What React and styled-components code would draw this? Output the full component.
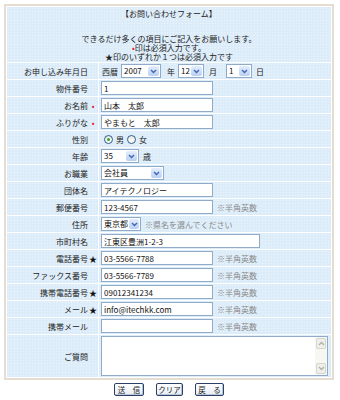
import React from 'react'
import styled, { createGlobalStyle } from 'styled-components'

const GlobalStyle = createGlobalStyle`
  body {
    margin: 0;
    background: #ffffff;
    font-family: "Noto Sans CJK JP", "DejaVu Sans", sans-serif;
    font-size: 8px;
    color: #222;
  }
`

const Frame = styled.div`
  margin: 4px 0 0 4px;
  width: 330px;
  box-sizing: border-box;
  border: 2px solid #e4ddd0;
  background: #ffffff;
`

const FormTable = styled.table`
  width: 100%;
  border-collapse: separate;
  border-spacing: 1px;
  background: #ffffff;
`

const Cell = styled.td`
  background-color: #dcecf9;
  background-image: radial-gradient(#ecf5fd 0.6px, transparent 0.8px);
  background-size: 3px 3px;
  padding: 0;
  height: ${p => p.$h || 16}px;
  line-height: 9px;
  vertical-align: middle;
`

const HeaderCell = styled(Cell)`
  text-align: center;
  vertical-align: top;
  padding-top: 2px;
`

const Title = styled.div`
  margin-bottom: 16px;
`

const LabelCell = styled(Cell)`
  width: 91px;
  text-align: right;
  white-space: nowrap;
`

const ValueCell = styled(Cell)`
  padding-left: 2px;
  white-space: nowrap;
`

const Mark = styled.span`
  display: inline-block;
  width: 10px;
  text-align: center;
  color: ${p => (p.$red ? '#e8202a' : '#111')};
`

const Red = styled.span`
  color: #e8202a;
`

const Inline = styled.div`
  display: flex;
  align-items: center;
  gap: ${p => p.$gap || 4}px;
`

const Unit = styled.span`
  margin: 0 ${p => p.$r || 0}px 0 ${p => p.$l || 0}px;
`

const TextInput = styled.input`
  box-sizing: border-box;
  width: ${p => p.$w || 112}px;
  height: 14px;
  border: 1px solid #8fabc9;
  background: #fff;
  padding: 0 2px;
  margin: 0;
  font-family: "Noto Sans CJK JP", "DejaVu Sans", sans-serif;
  font-size: 8px;
  color: #111;
  outline: none;
`

const Hint = styled.span`
  color: #8a8a8a;
`

const SelectBox = styled.span`
  display: inline-flex;
  box-sizing: border-box;
  width: ${p => p.$w}px;
  height: 14px;
  border: 1px solid #8fabc9;
  background: #fff;
`

const SelectValue = styled.span`
  flex: 1;
  padding-left: 2px;
  line-height: 12px;
  color: #111;
`

const SelectArrow = styled.span`
  width: 11px;
  margin: 1px;
  border-radius: 2px;
  background: linear-gradient(#e4eefd, #b9d0f4);
  display: flex;
  align-items: center;
  justify-content: center;
`

const Radio = styled.span`
  display: inline-flex;
  align-items: center;
  justify-content: center;
  box-sizing: border-box;
  width: 9px;
  height: 9px;
  border-radius: 50%;
  border: 1px solid #2c5d8c;
  background: linear-gradient(#e8e8e0, #ffffff);
  &::after {
    content: '';
    width: 3px;
    height: 3px;
    border-radius: 50%;
    background: ${p => (p.$checked ? '#2fa52f' : 'transparent')};
  }
`

const AreaBox = styled.div`
  display: flex;
  box-sizing: border-box;
  width: 227px;
  height: 40px;
  border: 1px solid #8fabc9;
  background: #fff;
`

const Area = styled.textarea`
  flex: 1;
  border: none;
  resize: none;
  outline: none;
  background: transparent;
  margin: 0;
  padding: 0;
`

const ScrollTrack = styled.div`
  width: 10px;
  display: flex;
  flex-direction: column;
  justify-content: space-between;
  padding: 1px;
  background: #f6f6f2;
`

const ScrollButton = styled.span`
  height: 9px;
  border: 1px solid #d6d6cc;
  border-radius: 2px;
  background: #f0f0ea;
  display: flex;
  align-items: center;
  justify-content: center;
`

const Buttons = styled.div`
  width: 330px;
  margin-left: 4px;
  margin-top: 3px;
  display: flex;
  justify-content: center;
  gap: 12px;
`

const Button = styled.button`
  box-sizing: border-box;
  width: ${p => p.$w}px;
  height: 13px;
  padding: 0;
  border: 1px solid #2c3f66;
  border-radius: 2px;
  background: linear-gradient(#ffffff, #e6ecf5);
  box-shadow: inset -1px -1px 0 #b8c4d8;
  font-family: "Noto Sans CJK JP", "DejaVu Sans", sans-serif;
  font-size: 7.5px;
  line-height: 11px;
  color: #222;
  white-space: nowrap;
`

const Chevron = ({ up, color = '#3f66b0' }) => (
  <svg width="7" height="5" viewBox="0 0 7 5">
    <path d={up ? 'M1 4 L3.5 1.5 L6 4' : 'M1 1 L3.5 3.5 L6 1'} fill="none" stroke={color} strokeWidth="1.4" />
  </svg>
)

const Select = ({ w, value }) => (
  <SelectBox $w={w}>
    <SelectValue>{value}</SelectValue>
    <SelectArrow><Chevron /></SelectArrow>
  </SelectBox>
)

const Row = ({ label, mark, children }) => (
  <tr>
    <LabelCell>
      {label}
      <Mark $red={mark === '*'}>{mark === '*' ? '•' : mark}</Mark>
    </LabelCell>
    <ValueCell>{children}</ValueCell>
  </tr>
)

const phoneRows = [
  { label: '電話番号', mark: '★', value: '03-5566-7788' },
  { label: 'ファックス番号', value: '03-5566-7789' },
  { label: '携帯電話番号', mark: '★', value: '09012341234' },
  { label: 'メール', mark: '★', value: 'info@itechkk.com' },
  { label: '携帯メール', value: '' },
]

export default function App() {
  return (
    <>
      <GlobalStyle />
      <Frame>
        <FormTable>
          <tbody>
            <tr>
              <HeaderCell colSpan={2} $h={53}>
                <Title>【お問い合わせフォーム】</Title>
                <div>できるだけ多くの項目にご記入をお願いします。</div>
                <div><Red>•</Red>印は必須入力です。</div>
                <div>★印のいずれか１つは必須入力です</div>
              </HeaderCell>
            </tr>
            <Row label="お申し込み年月日">
              <Inline $gap={3}>
                <Unit $l={1}>西暦</Unit>
                <Select w={40} value="2007" />
                <Unit $l={3}>年</Unit>
                <Select w={26} value="12" />
                <Unit $l={2} $r={6}>月</Unit>
                <Select w={26} value="1" />
                <Unit $l={1}>日</Unit>
              </Inline>
            </Row>
            <Row label="物件番号"><TextInput defaultValue="1" /></Row>
            <Row label="お名前" mark="*"><TextInput defaultValue="山本　太郎" /></Row>
            <Row label="ふりがな" mark="*"><TextInput defaultValue="やまもと　太郎" /></Row>
            <Row label="性別">
              <Inline $gap={3}>
                <span />
                <Radio $checked />
                <span>男</span>
                <Radio />
                <span>女</span>
              </Inline>
            </Row>
            <Row label="年齢">
              <Inline><Select w={38} value="35" /><span>歳</span></Inline>
            </Row>
            <Row label="お職業"><Select w={63} value="会社員" /></Row>
            <Row label="団体名"><TextInput defaultValue="アイテクノロジー" /></Row>
            <Row label="郵便番号">
              <Inline><TextInput defaultValue="123-4567" /><Hint>※半角英数</Hint></Inline>
            </Row>
            <Row label="住所">
              <Inline><Select w={40} value="東京都" /><Hint>※県名を選んでください</Hint></Inline>
            </Row>
            <Row label="市町村名"><TextInput $w={159} defaultValue="江東区豊洲1-2-3" /></Row>
            {phoneRows.map(r => (
              <Row key={r.label} label={r.label} mark={r.mark}>
                <Inline><TextInput defaultValue={r.value} /><Hint>※半角英数</Hint></Inline>
              </Row>
            ))}
            <tr>
              <LabelCell $h={42}>ご質問<Mark /></LabelCell>
              <ValueCell $h={42}>
                <AreaBox>
                  <Area />
                  <ScrollTrack>
                    <ScrollButton><Chevron up color="#b0b0a8" /></ScrollButton>
                    <ScrollButton><Chevron color="#b0b0a8" /></ScrollButton>
                  </ScrollTrack>
                </AreaBox>
              </ValueCell>
            </tr>
          </tbody>
        </FormTable>
      </Frame>
      <Buttons>
        <Button $w={30}>送　信</Button>
        <Button $w={27}>クリア</Button>
        <Button $w={29}>戻　る</Button>
      </Buttons>
    </>
  )
}
